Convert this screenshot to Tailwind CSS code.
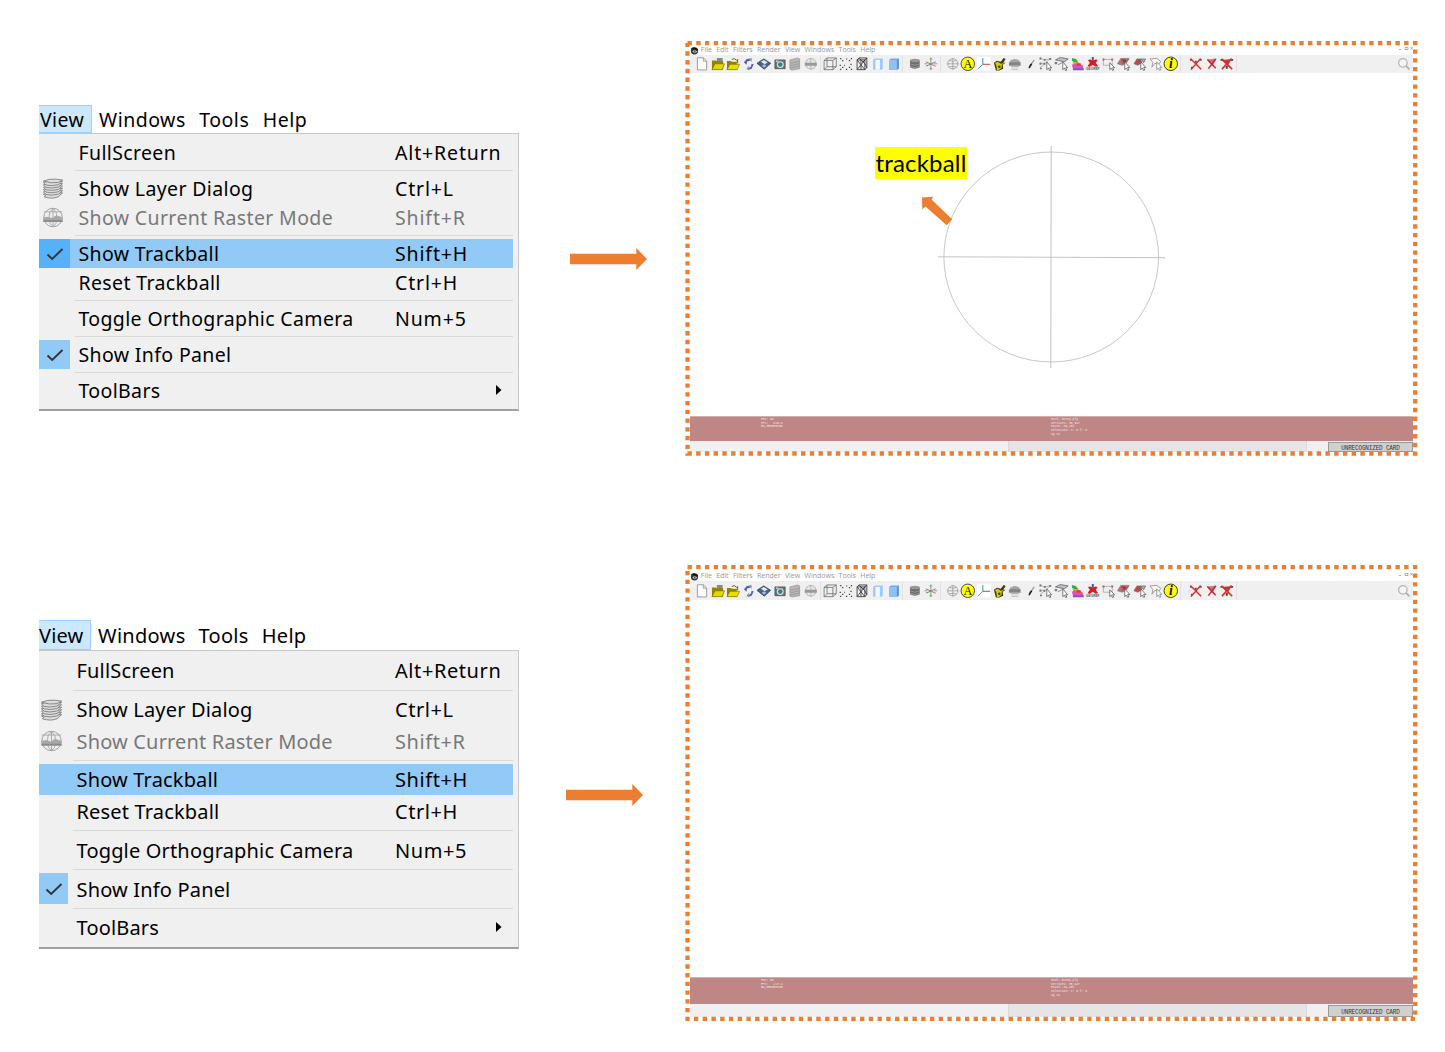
<!DOCTYPE html>
<html lang="en">
<head>
<meta charset="utf-8">
<title>Show Trackball</title>
<script src="https://cdn.jsdelivr.net/npm/@tailwindcss/browser@4"></script>
</head>
<body class="bg-white w-[1445px] h-[1052px] overflow-hidden font-['Noto_Sans',sans-serif] text-black">

<svg class="hidden">
  <symbol id="layers" viewBox="0 0 24 24"><g fill="#dcdcdc" stroke="#757575" stroke-width=".9"><path d="M1 18.500l5-1.500h17l-5 4.500q-4 1.500-7 1.500-5 0-9-1.500l2-1.500z"/><path d="M1 16l5-1.500h17l-5 4q-8 2-14 .3z"/><path d="M1 13.300l5-1.500h17l-5 4q-8 2-14 .3z"/><path d="M1 10.600l5-1.500h17l-5 4q-8 2-14 .3z"/><path d="M1 7.900l5-1.500h17l-5 4q-8 2-14 .3z"/><path d="M1 5.200l5-1.500h17l-5 4q-8 2-14 .3z"/><path d="M1 3.500l7-2q7-.8 15 .8l-5 2.800q-8 1.500-17-1.600z"/></g></symbol>
  <symbol id="raster" viewBox="0 0 24 24"><circle cx="12" cy="12" r="10.600" fill="#eee" stroke="#999"/><path d="M1.500 5.500h21M12 1.700q-5 4-4.500 10M12 1.700q5 4 4.500 10M12 1.700v20.600M7.500 14q.5 6 4.500 8.300Q16 20 16.500 14" fill="none" stroke="#a5a5a5"/><path d="M1 12l5-1 5 1.500 5-3 7 2.500v5H1z" fill="#a8a8a8"/><path d="M1 15h22v2H1z" fill="#8b8b8b"/></symbol>
  <symbol id="check" viewBox="0 0 18 14"><path d="M1.500 7.500l4.700 4.500L16.500 2" fill="none" stroke="#333" stroke-width="1.900"/></symbol>
  <symbol id="search" viewBox="0 0 16 16"><circle cx="6.700" cy="6.700" r="4.900" fill="#f5f5f5" stroke="#b5b5b5" stroke-width="1.400"/><path d="M10.200 10.200l4 4" stroke="#b0b0b0" stroke-width="2"/></symbol>
  <symbol id="eye" viewBox="0 0 16 16"><circle cx="8" cy="8.500" r="6.500" fill="#333"/><path d="M1 5q6-5 13 1l-2 2Q8 4 1 5z" fill="#111"/><path d="M4 10q4-5 9 0-4 4-9 0z" fill="#c4cec8"/><circle cx="8.500" cy="9.500" r="1.400" fill="#333"/></symbol>

  <symbol id="new" viewBox="0 0 16 16"><path d="M3.500 1.800h6l3.500 3.500v9h-9.500z" fill="#fff" stroke="#9b9b9b"/><path d="M9.500 1.800v3.500H13" fill="none" stroke="#9b9b9b"/></symbol>
  <symbol id="open" viewBox="0 0 16 16"><path d="M7 2h6v6H7z" fill="#8a8a8a"/><path d="M2 14V4.500h4l1 1h6.500V14z" fill="#8f8500"/><path d="M2 14l3-6h10l-2.500 6z" fill="#e2d800" stroke="#6f6800" stroke-width=".6"/></symbol>
  <symbol id="import" viewBox="0 0 16 16"><path d="M7 3.500q3-2 5 1l1-1v3.500h-3.500" fill="none" stroke="#565600" stroke-width=".9"/><path d="M2 14V5h4l1 1h5v8z" fill="#8f8500"/><path d="M2 14l3-5.500h10L12.500 14z" fill="#e9df00" stroke="#6f6800" stroke-width=".6"/></symbol>
  <symbol id="reload" viewBox="0 0 16 16"><path d="M3 6.500L6 3l4.500-.5L9 5 6.500 5.500l-1 3.500z" fill="#4d65ae"/><path d="M8 3l3-1v4z" fill="#7e91cd"/><path d="M13 8.500L11 13l-4 1.500L8 12l2-1 1-3z" fill="#4d65ae"/><path d="M9 14l-3.500-.5L8 10z" fill="#7e91cd"/></symbol>
  <symbol id="export" viewBox="0 0 16 16"><path d="M8 3l7 4.500L8.500 13.500 1 7.500z" fill="#43658e" stroke="#283a55" stroke-width=".8"/><path d="M5 6l3-2 4 2.500-3 2z" fill="#e3e9ef"/><path d="M6 10l2.500-1.500 2 1.500-2 2z" fill="#adc2db"/></symbol>
  <symbol id="camera" viewBox="0 0 16 16"><path d="M3 4h10.500v9H3z" fill="#6d7676" stroke="#4a4f4f" stroke-width=".8"/><path d="M4 4.500h2.500V6H4z" fill="#ddd"/><circle cx="8.500" cy="8.800" r="3.500" fill="#dce7e5"/><circle cx="8.500" cy="8.800" r="2.400" fill="#2d8681"/></symbol>
  <symbol id="layersS" viewBox="0 0 16 16"><g fill="#b7b7b7" stroke="#929292" stroke-width=".7"><path d="M3 4l8-2 2 1v10l-8 1.500-2-1z"/><path d="M3 6.500l2 .8 8-2M3 9l2 .8 8-2M3 11.500l2 .8 8-2" fill="none"/></g></symbol>
  <symbol id="rasterS" viewBox="0 0 16 16"><circle cx="8" cy="8" r="5.500" fill="#e5e5e5" stroke="#a8a8a8" stroke-width=".8"/><path d="M8 2v12" stroke="#aaa" stroke-width=".7"/><path d="M1.800 7h12.400v3H1.800z" fill="#999"/></symbol>
  <symbol id="box" viewBox="0 0 16 16"><path d="M2 4.500h9V14H2zM5 2h9.500v9H5zM2 4.500L5 2M11 4.500L14.500 2M11 14l3.500-3M2 14l3-3" fill="none" stroke="#6a6a6a" stroke-width=".8"/></symbol>
  <symbol id="points" viewBox="0 0 16 16"><g fill="#444"><path d="M2 2h1.300v1.300H2zM4 4h1.300v1.300H4zM13 2h1.300v1.300H13zM11 4h1.300v1.300H11zM8 2.500h1.300v1H8zM1.500 9h1.300v1.300H1.500zM4 11h1.300v1.300H4zM2 13h1.300v1.300H2zM11 11h1.300v1.300H11zM13 13h1.300v1.300H13zM8 13h1.300v1.300H8zM12.500 8h1.300v1.300H12.500zM6 9h1v1H6z"/></g></symbol>
  <symbol id="wire" viewBox="0 0 16 16"><path d="M3 4l2-2h8v10l-2 2H3zM3 4h8v10M11 4l2-2M3 4l4 5-4 5M11 4L7 9l4 5M7 4v10M5 2l6 6M13 2L9 6M13 12l-2-4" fill="none" stroke="#3c3c3c" stroke-width=".9"/></symbol>
  <symbol id="flat" viewBox="0 0 16 16"><path d="M3 4l2-1.500h8v10L11.500 14H3z" fill="#9ecaf5"/><path d="M5.500 4H10v10H5.500z" fill="#f3f8fe"/></symbol>
  <symbol id="smooth" viewBox="0 0 16 16"><path d="M3 4l2-1.500h8v10L11.500 14H3z" fill="#6aaaf0"/><path d="M3 4h8v10H3z" fill="#8fc1f6"/><path d="M11 4l2-1.500v10L11 14z" fill="#5b93d6"/></symbol>
  <symbol id="cyl" viewBox="0 0 16 16"><path d="M3 4.500v7q5 3 10 0v-7z" fill="#6c6c6c"/><ellipse cx="8" cy="4.500" rx="5" ry="1.800" fill="#979797"/><path d="M3 8q5 3 10 0M3 10.500q5 3 10 0" fill="none" stroke="#aaa" stroke-width=".7"/></symbol>
  <symbol id="axes" viewBox="0 0 16 16"><path d="M8 1.500v13" stroke="#65b365"/><path d="M3 6l10 4.500" stroke="#c66"/><path d="M3 10.500L13 6" stroke="#77a"/><path d="M6.500 3h3M6.500 13h3M1.500 8h3M11.500 8h3" stroke="#999"/></symbol>
  <symbol id="globe" viewBox="0 0 16 16"><g fill="none" stroke="#999" stroke-width=".8"><circle cx="8" cy="8" r="5.200"/><path d="M2 8h12M8 2v12M4 4.500q4 2 8 0M4 11.500q4-2 8 0"/></g></symbol>
  <symbol id="badgeA" viewBox="0 0 16 16"><circle cx="8" cy="8" r="6.900" fill="#ff0" stroke="#222" stroke-width=".8"/><text x="8" y="12.200" text-anchor="middle" font-family="Liberation Serif" font-size="12.500" fill="#111">A</text></symbol>
  <symbol id="axis" viewBox="0 0 16 16"><path d="M1 1h14v14H1z" fill="#fff"/><path d="M7 8.500V2" stroke="#2b9b96"/><path d="M7 8.500h7.500" stroke="#d33"/><path d="M7 8.500L2 13.500" stroke="#4b8bd0"/></symbol>
  <symbol id="measure" viewBox="0 0 16 16"><path d="M2 7l3-2 4 1 3-4 2 1-2.500 4H14l-3 2 .5 4-4 2H4l-1-4z" fill="#3c3908"/><path d="M3 7l3-1 3 2 4-1-3 2v3l-3 2.300H5L4.500 10z" fill="#d7c800"/><circle cx="7.500" cy="11" r="1.300" fill="#3c3908"/></symbol>
  <symbol id="georef" viewBox="0 0 16 16"><path d="M3 5q5-4 10 0v3H3z" fill="#a5a5a5"/><path d="M2 6.500h12V10H2z" fill="#858585"/><path d="M4 10h8v1.500H4zM4.500 13h7v1h-7z" fill="#b5b5b5"/></symbol>
  <symbol id="brush" viewBox="0 0 16 16"><path d="M11.500 4L8 9" stroke="#999" stroke-width="1.300"/><path d="M8.500 7.500l1 1-2.500 4H5.500q0-3 3-5z" fill="#222"/></symbol>
  <symbol id="selV" viewBox="0 0 16 16"><path d="M2 2l4 2 6-1M2 7l5 1 4-4M2 12l5-4" fill="none" stroke="#999" stroke-width=".7"/><path d="M1.500 1.500h2v2h-2zM6 3h2v2H6zM11.500 2h2v2h-2zM1.500 7h2v2h-2zM5.500 7h2v2h-2zM2 12h2v1.500H2z" fill="#777"/><path d="M9 6v8l1.700-1.600 1.200 2.600 1.200-.5-1.100-2.500h2z" fill="#fff" stroke="#444" stroke-width=".7"/></symbol>
  <symbol id="selF" viewBox="0 0 16 16"><path d="M1.500 4l5-2.500 8 1.500-4 3z" fill="#bbc" stroke="#666" stroke-width=".8"/><path d="M1 6.500h2V8H1zM4 9l4-2" stroke="#777" stroke-width=".8" fill="#966"/><path d="M9 6v8l1.700-1.600 1.200 2.600 1.200-.5-1.100-2.500h2z" fill="#fff" stroke="#444" stroke-width=".7"/></symbol>
  <symbol id="bunny" viewBox="0 0 16 16"><path d="M2 2l4 1 3 4H5L2 5z" fill="#3bab41"/><path d="M3 6l6 1 4 3-3 2-7-2z" fill="#dcae2c"/><path d="M2 9q6-3 11 1l1 3H3z" fill="#e04fb4"/><path d="M3 12.500h11v2H3z" fill="#7a55c6"/><path d="M7 7.500h4v2.500H7z" fill="#e83939"/></symbol>
  <symbol id="star" viewBox="0 0 16 16"><path d="M8 1v4" stroke="#3555b0" stroke-width="2"/><path d="M3 4l2.500-.5L8 5l2.500-1.500L13 4l-2 3 2.500 3.500-2.500.5-3-2-3 2-2.500-.5L5 7z" fill="#e3171c"/><text x="8" y="14.800" text-anchor="middle" font-family="Liberation Sans" font-weight="700" font-size="3.300" fill="#555">GEOREF</text></symbol>
  <symbol id="selR" viewBox="0 0 16 16"><path d="M2.500 3.500h9v6h-9z" fill="none" stroke="#999" stroke-width=".7"/><path d="M1.500 2.500h2v2h-2zM10.500 2.500h2v2h-2z" fill="#967"/><path d="M9 7v7l1.700-1.500 1.100 2.400 1.200-.5-1-2.400h2z" fill="#fff" stroke="#444" stroke-width=".7"/></symbol>
  <symbol id="red1" viewBox="0 0 16 16"><path d="M1.500 8l3.500-5.500h8.500l-3 5-4 2z" fill="#c07070" stroke="#777" stroke-width=".7"/><path d="M5 3l2 5 6-4.500" fill="none" stroke="#666" stroke-width=".7"/><path d="M6 3l5 1-3 3z" fill="#b02a2a"/><path d="M9 6v8l1.700-1.700 1.200 2.500 1.300-.5-1.200-2.500h2.200z" fill="#fff" stroke="#444" stroke-width=".7"/></symbol>
  <symbol id="red2" viewBox="0 0 16 16"><path d="M2 8l3-5 4 0 1 4-4 2.500z" fill="#b84a4a" stroke="#777" stroke-width=".7"/><path d="M9 3h5l-2 4z" fill="#aaa" stroke="#555" stroke-width=".6"/><path d="M9 6v8l1.700-1.700 1.200 2.500 1.300-.5-1.200-2.500h2.200z" fill="#fff" stroke="#444" stroke-width=".7"/></symbol>
  <symbol id="poly" viewBox="0 0 16 16"><path d="M2 3l7-.5 4 3-2 3-4-1-3 4 1-5z" fill="#fafafa" stroke="#888" stroke-width=".8"/><path d="M9 6v8l1.700-1.700 1.200 2.500 1.300-.5-1.200-2.500h2.200z" fill="#fff" stroke="#777" stroke-width=".7"/></symbol>
  <symbol id="info" viewBox="0 0 16 16"><circle cx="8" cy="8" r="6.900" fill="#ff0" stroke="#222" stroke-width=".9"/><text x="8" y="12.500" text-anchor="middle" font-family="Liberation Serif" font-style="italic" font-weight="700" font-size="14" fill="#111">i</text></symbol>
  <symbol id="delV" viewBox="0 0 16 16"><path d="M2 3h2v2H2zM7 5h2v2H7zM12 3h2v2h-2zM3 11h2v2H3z" fill="#555"/><path d="M2.500 2.500l11 11M13 2.500L3 14" stroke="#e22b2b" stroke-width="1.500"/></symbol>
  <symbol id="delF" viewBox="0 0 16 16"><path d="M3.500 4l9-1-4 7z" fill="#c07a7a" stroke="#888" stroke-width=".7"/><path d="M3.500 3.500l8.500 9M12 3L4.500 13" stroke="#e02020" stroke-width="1.500"/></symbol>
  <symbol id="delVF" viewBox="0 0 16 16"><path d="M3 4l10-1-4 7z" fill="#b34444"/><path d="M1.500 3h3v2h-3zM12 3h2.500v2H12zM7 10h2v3H7z" fill="#444"/><path d="M2.500 3l11 10.500M13 2.500L3 13.500" stroke="#e22b2b" stroke-width="1.700"/></symbol>
</svg>

<main id="page" class="relative w-[1445px] h-[1052px]"></main>

<script>
const icon = (id, cls) => `<svg class="${cls}"><use href="#${id}"/></svg>`;
const entries = [
  ['FullScreen','Alt+Return'], '-', ['Show Layer Dialog','Ctrl+L','layers'], ['Show Current Raster Mode','Shift+R','raster'], '-',
  ['Show Trackball','Shift+H','hot'], ['Reset Trackball','Ctrl+H'], '-', ['Toggle Orthographic Camera','Num+5'], '-', ['Show Info Panel','','check'], '-', ['ToolBars','','sub']
];
const first = {
  bar: 'h-[28px]', view: 'w-[53px] pl-[1px] pt-[2px]', titles: 'pl-[7px] pt-[2px] gap-[13.5px] tracking-[0.5px]', font: 'text-[19.500px] tracking-[0.36px]', key: 'tracking-[0.85px]', label: 'pt-0',
  panel: 'h-[277.500px] pt-[4px]', row: 'h-[29px]', sep: 'h-[7px] pt-[3px] pl-[36px]', gutter: 'w-[31px] mr-[8.500px]', icons: 'w-[22px] h-[21px] ml-[3px]', tick: 'w-[18px] h-[14px] ml-[7px]', checked: true
};
const second = {
  bar: 'h-[30px]', view: 'w-[52px] pl-0 pt-[2px]', titles: 'pl-[7px] pt-[2px] gap-[13px] tracking-[0.3px]', font: 'text-[20px] tracking-[0.17px]', key: 'tracking-[0.580px]', label: 'pt-[1.5px]',
  panel: 'h-[299px] pt-[4px]', row: 'h-[31.300px]', sep: 'h-[7.600px] pt-[3.300px] pl-[34px]', gutter: 'w-[29px] mr-[8.500px]', icons: 'w-[23px] h-[22px] ml-[1px]', tick: 'w-[18px] h-[14px] ml-[6px]', checked: false
};
function menu(m) {
  return `<section class="w-[480px] whitespace-nowrap ${m.font}">
    <nav class="flex ${m.bar}">
      <div class="flex items-center bg-[#cce8ff] border-t border-r border-b border-[#99d1ff] ${m.view}">View</div>
      <div class="flex items-center ${m.titles}"><span>Windows</span><span>Tools</span><span>Help</span></div>
    </nav>
    <div class="bg-[#f0f0f0] border-t border-r border-[#c8c8c8] border-b-2 border-b-[#a0a0a0] pr-[5px] ${m.panel}">
    ${entries.map(e => {
      if (e === '-') return `<div class="${m.sep}"><div class="h-px bg-[#d9d9d9]"></div></div>`;
      const [label, key, kind] = e;
      const hot = kind === 'hot';
      const ticked = kind === 'check' || (hot && m.checked);
      const glyph = kind === 'layers' || kind === 'raster' ? icon(kind, m.icons) : ticked ? icon('check', m.tick) : '';
      return `<div class="flex items-center ${m.row} ${hot ? 'bg-[#91c9f7]' : ''} ${kind === 'raster' ? 'text-[#787878]' : ''}">
        <div class="h-full flex items-center shrink-0 ${m.gutter} ${ticked ? (hot ? 'bg-[#56b0fa]' : 'bg-[#91c9f7]') : ''}">${glyph}</div>
        <span class="grow ${m.label}">${label}</span>
        ${kind === 'sub' ? '<svg class="w-[6px] h-[10px] mr-[11px] -mt-[2px]" viewBox="0 0 6 10"><path d="M0 0l5.500 5L0 10z"/></svg>' : `<span class="w-[118px] shrink-0 ${m.key} ${m.label}">${key}</span>`}
      </div>`; }).join('')}
    </div></section>`;
}
const groups = [
  ['ml-[4px]', 'w-[15.570px]', ['new','open','import','reload','export','camera','layersS','rasterS']],
  ['ml-[1.500px]', 'w-[15.900px]', ['box','points','wire','flat','smooth']],
  ['ml-[4px]', 'w-[15.700px]', ['cyl','axes']],
  ['ml-[4px]', 'w-[15.600px]', ['globe','badgeA','axis','measure','georef','brush','selV','selF','bunny','star','selR','red1','red2','poly','info']],
  ['ml-[7.500px]', 'w-[15.600px]', ['delV','delF','delVF']]
];
function frame(f) {
  return `<section class="relative w-[733px] ${f.size} font-['Open_Sans',sans-serif]">
    <div class="flex flex-col h-full px-[5px] pb-[4px] ${f.top}">
      <div class="flex items-center h-[10px] text-[7px] text-[#999] gap-[4.300px] whitespace-nowrap">
        ${icon('eye','w-[9px] h-[9px] -mr-[2.500px]')}<span>File</span><span>Edit</span><span>Filters</span><span>Render</span><span>View</span><span>Windows</span><span>Tools</span><span>Help</span>
        <svg class="w-[14px] h-[5px] ml-auto -mt-[4px]" viewBox="0 0 14 5"><path d="M0 3.500h2M6 1.500h3v2H6zM11.500 1l2 2.500M13.500 1l-2 2.500" fill="none" stroke="#999" stroke-width=".8"/></svg>
      </div>
      <div class="flex items-center bg-[#f0f0f0] shrink-0 ${f.tool}">
        ${groups.map(([ml, w, names]) => `<div class="flex items-center h-full ${ml}">${names.map(n => icon(n, w + ' h-[15.600px]')).join('')}</div><div class="w-px h-full bg-[#e2e2e2] ml-px"></div>`).join('')}
        ${icon('search','w-[14px] h-[14px] ml-auto mr-[2px]')}
      </div>
      <div class="grow relative">${f.scene}</div>
      <div class="shrink-0 bg-[#bf8686] border-t border-[#d3aeae] ${f.band}">
        <div class="flex items-start pl-[71px] pt-[0.200px] origin-top scale-y-[1.300] text-[#f5e6e6] text-[3px] leading-[3px] whitespace-pre font-['Liberation_Mono',monospace]">
          <div class="w-[290px]">FOV: 60<br>FPS:   ${f.fps}<br>BO_RENDERING</div>
          <div>Mesh: bunny.ply<br>Vertices: 35,947<br>Faces: 69,451<br>Selection: v: 0 f: 0<br>VQ VC</div>
        </div>
      </div>
      <div class="flex shrink-0 bg-[#f0f0f0] ${f.status}">
        <div class="ml-[318px] w-[299px] bg-[#e5e5e5] border-x border-[#dadada]"></div>
        <div class="ml-auto mt-px w-[85px] bg-[#d0d0d0] border border-[#9a9a9a] flex items-center justify-center text-[#333] leading-none whitespace-nowrap font-['Liberation_Mono',monospace]"><span class="pt-px text-[6px] tracking-[-0.170px] scale-y-[1.350]">UNRECOGNIZED CARD</span></div>
      </div>
    </div>
    <svg class="absolute inset-0 w-full h-full"><path d="${f.path}" fill="none" stroke="#ed7d31" stroke-width="4.300" stroke-dasharray="4.370 4.370"/></svg>
  </section>`;
}
const arrow = '<svg class="w-[77px] h-[22px]" viewBox="0 0 77 22"><path d="M0 5.700h66.300V0L77 11 66.300 22v-5.700H0z" fill="#ed7d31"/></svg>';
const trackball = `<svg class="absolute left-[248px] top-[72px] w-[228px] h-[224px]" viewBox="938 145 228 224"><g fill="none"><ellipse cx="1051.200" cy="257" rx="107.300" ry="105" stroke="#c8c8c8"/><path d="M938 256.800l227 .9" stroke="#bdc8bd"/><path d="M1051.200 146l-.4 222" stroke="#c8bec0"/></g></svg>
  <span class="absolute left-[185px] top-[74px] w-[92px] h-[32px] bg-[#ff0] flex items-center justify-center text-[24px] tracking-[0.200px] leading-none font-['Lato',sans-serif]">trackball</span>
  <svg class="absolute left-[231px] top-[123px] w-[32px] h-[30px]" viewBox="921 196 32 30"><path d="M922 197.500l11.500-.7-2 2.800 20.600 19.700-5.400 5.900-21.200-18.800-3.200 3z" fill="#ed7d31"/></svg>`;
document.getElementById('page').innerHTML = `
  <div class="flex items-start pl-[39px] h-[565px]">
    <div class="pt-[105px]">${menu(first)}</div>
    <div class="pt-[248px] pl-[51px] w-[166px]">${arrow}</div>
    <div class="pt-[41px]">${frame({size:'h-[415px]', top:'pt-[4px]', tool:'h-[18px]', band:'h-[25px]', status:'h-[11px]', fps:'629.0', scene:trackball, path:'M2.500 2h727.700v410.500H2.500V2'})}</div>
  </div>
  <div class="flex items-start pl-[39px]">
    <div class="pt-[55px]">${menu(second)}</div>
    <div class="pt-[219px] pl-[47px] w-[166px]">${arrow}</div>
    <div>${frame({size:'h-[456px]', top:'pt-[6px]', tool:'h-[19px]', band:'h-[27px]', status:'h-[13px]', fps:'217.4', scene:'', path:'M2.500 2h727.700v452H2.500V2'})}</div>
  </div>`;
</script>
</body>
</html>
